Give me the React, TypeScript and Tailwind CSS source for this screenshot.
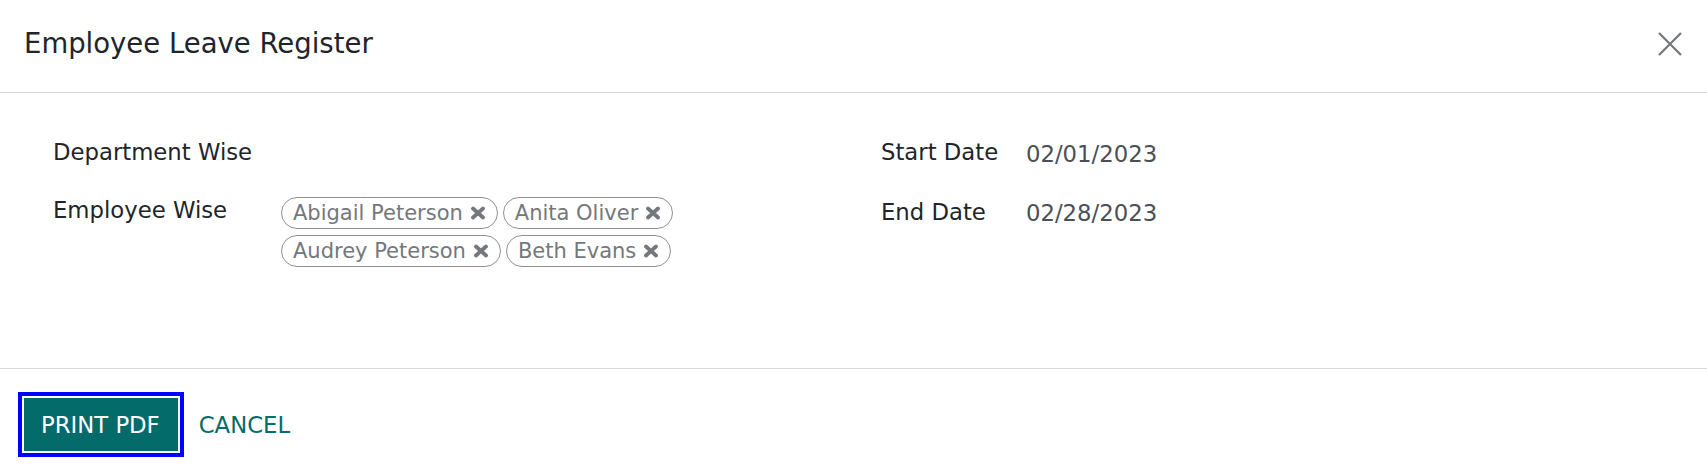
const employees = ["Abigail Peterson", "Anita Oliver", "Audrey Peterson", "Beth Evans"];

const Tag = ({ name }: { name: string }) => {
  return (
    <span className="flex h-[32px] items-center gap-[7px] rounded-full border border-[#8e9194] pl-[11px] pr-[11px] text-[21px] leading-[26px] text-[#74787c]">
      {name}
      <svg width="16" height="14" viewBox="0 0 16 14" className="shrink-0">
        <path d="M3 2.5 L13 11.5 M13 2.5 L3 11.5" stroke="#74787c" strokeWidth="3.8" strokeLinecap="round" />
      </svg>
    </span>
  );
};

const App = () => {
  return (
    <div className="flex h-[472px] w-full flex-col bg-white font-['DejaVu_Sans',sans-serif] text-[#212529]">
      {/* header */}
      <div className="flex h-[93px] items-start justify-between border-b border-[#d3d5d9] pl-[24px] pr-[25px] pt-[23px]">
        <h4 className="text-[27.5px] leading-[41px]">Employee Leave Register</h4>
        <div className="flex h-[41px] items-center">
          <svg width="24" height="24" viewBox="0 0 24 24">
            <path d="M1 1 L23 23 M23 1 L1 23" stroke="#73777b" strokeWidth="2.2" />
          </svg>
        </div>
      </div>

      {/* body */}
      <div className="flex h-[276px] border-b border-[#d8dadd] pl-[53px] pt-[42px] text-[22.75px] leading-[34px]">
        <div className="flex w-[828px] flex-col gap-[24px]">
          <div className="flex">
            <div className="w-[228px]">Department Wise</div>
          </div>
          <div className="flex">
            <div className="w-[228px]">Employee Wise</div>
            <div className="flex w-[420px] flex-wrap gap-x-[5px] gap-y-[6px] pt-[4px]">
              {employees.map((e) => (
                <Tag key={e} name={e} />
              ))}
            </div>
          </div>
        </div>
        <div className="flex flex-col gap-[24px]">
          <div className="flex">
            <div className="w-[145px]">Start Date</div>
            <div className="pt-[2px] text-[#4a5056]">02/01/2023</div>
          </div>
          <div className="flex">
            <div className="w-[145px]">End Date</div>
            <div className="pt-[1px] text-[#4a5056]">02/28/2023</div>
          </div>
        </div>
      </div>

      {/* footer */}
      <div className="flex items-start gap-[3px] pl-[24px] pt-[29px] text-[22.75px] leading-[34px]">
        <button className="flex h-[53px] items-center bg-[#046b6b] pl-[17px] pr-[18px] text-white outline-4 outline-[#0000ff] outline-offset-2">
          PRINT PDF
        </button>
        <button className="flex h-[53px] items-center px-[18px] text-[#046b6b]">CANCEL</button>
      </div>
    </div>
  );
};

export default App;
